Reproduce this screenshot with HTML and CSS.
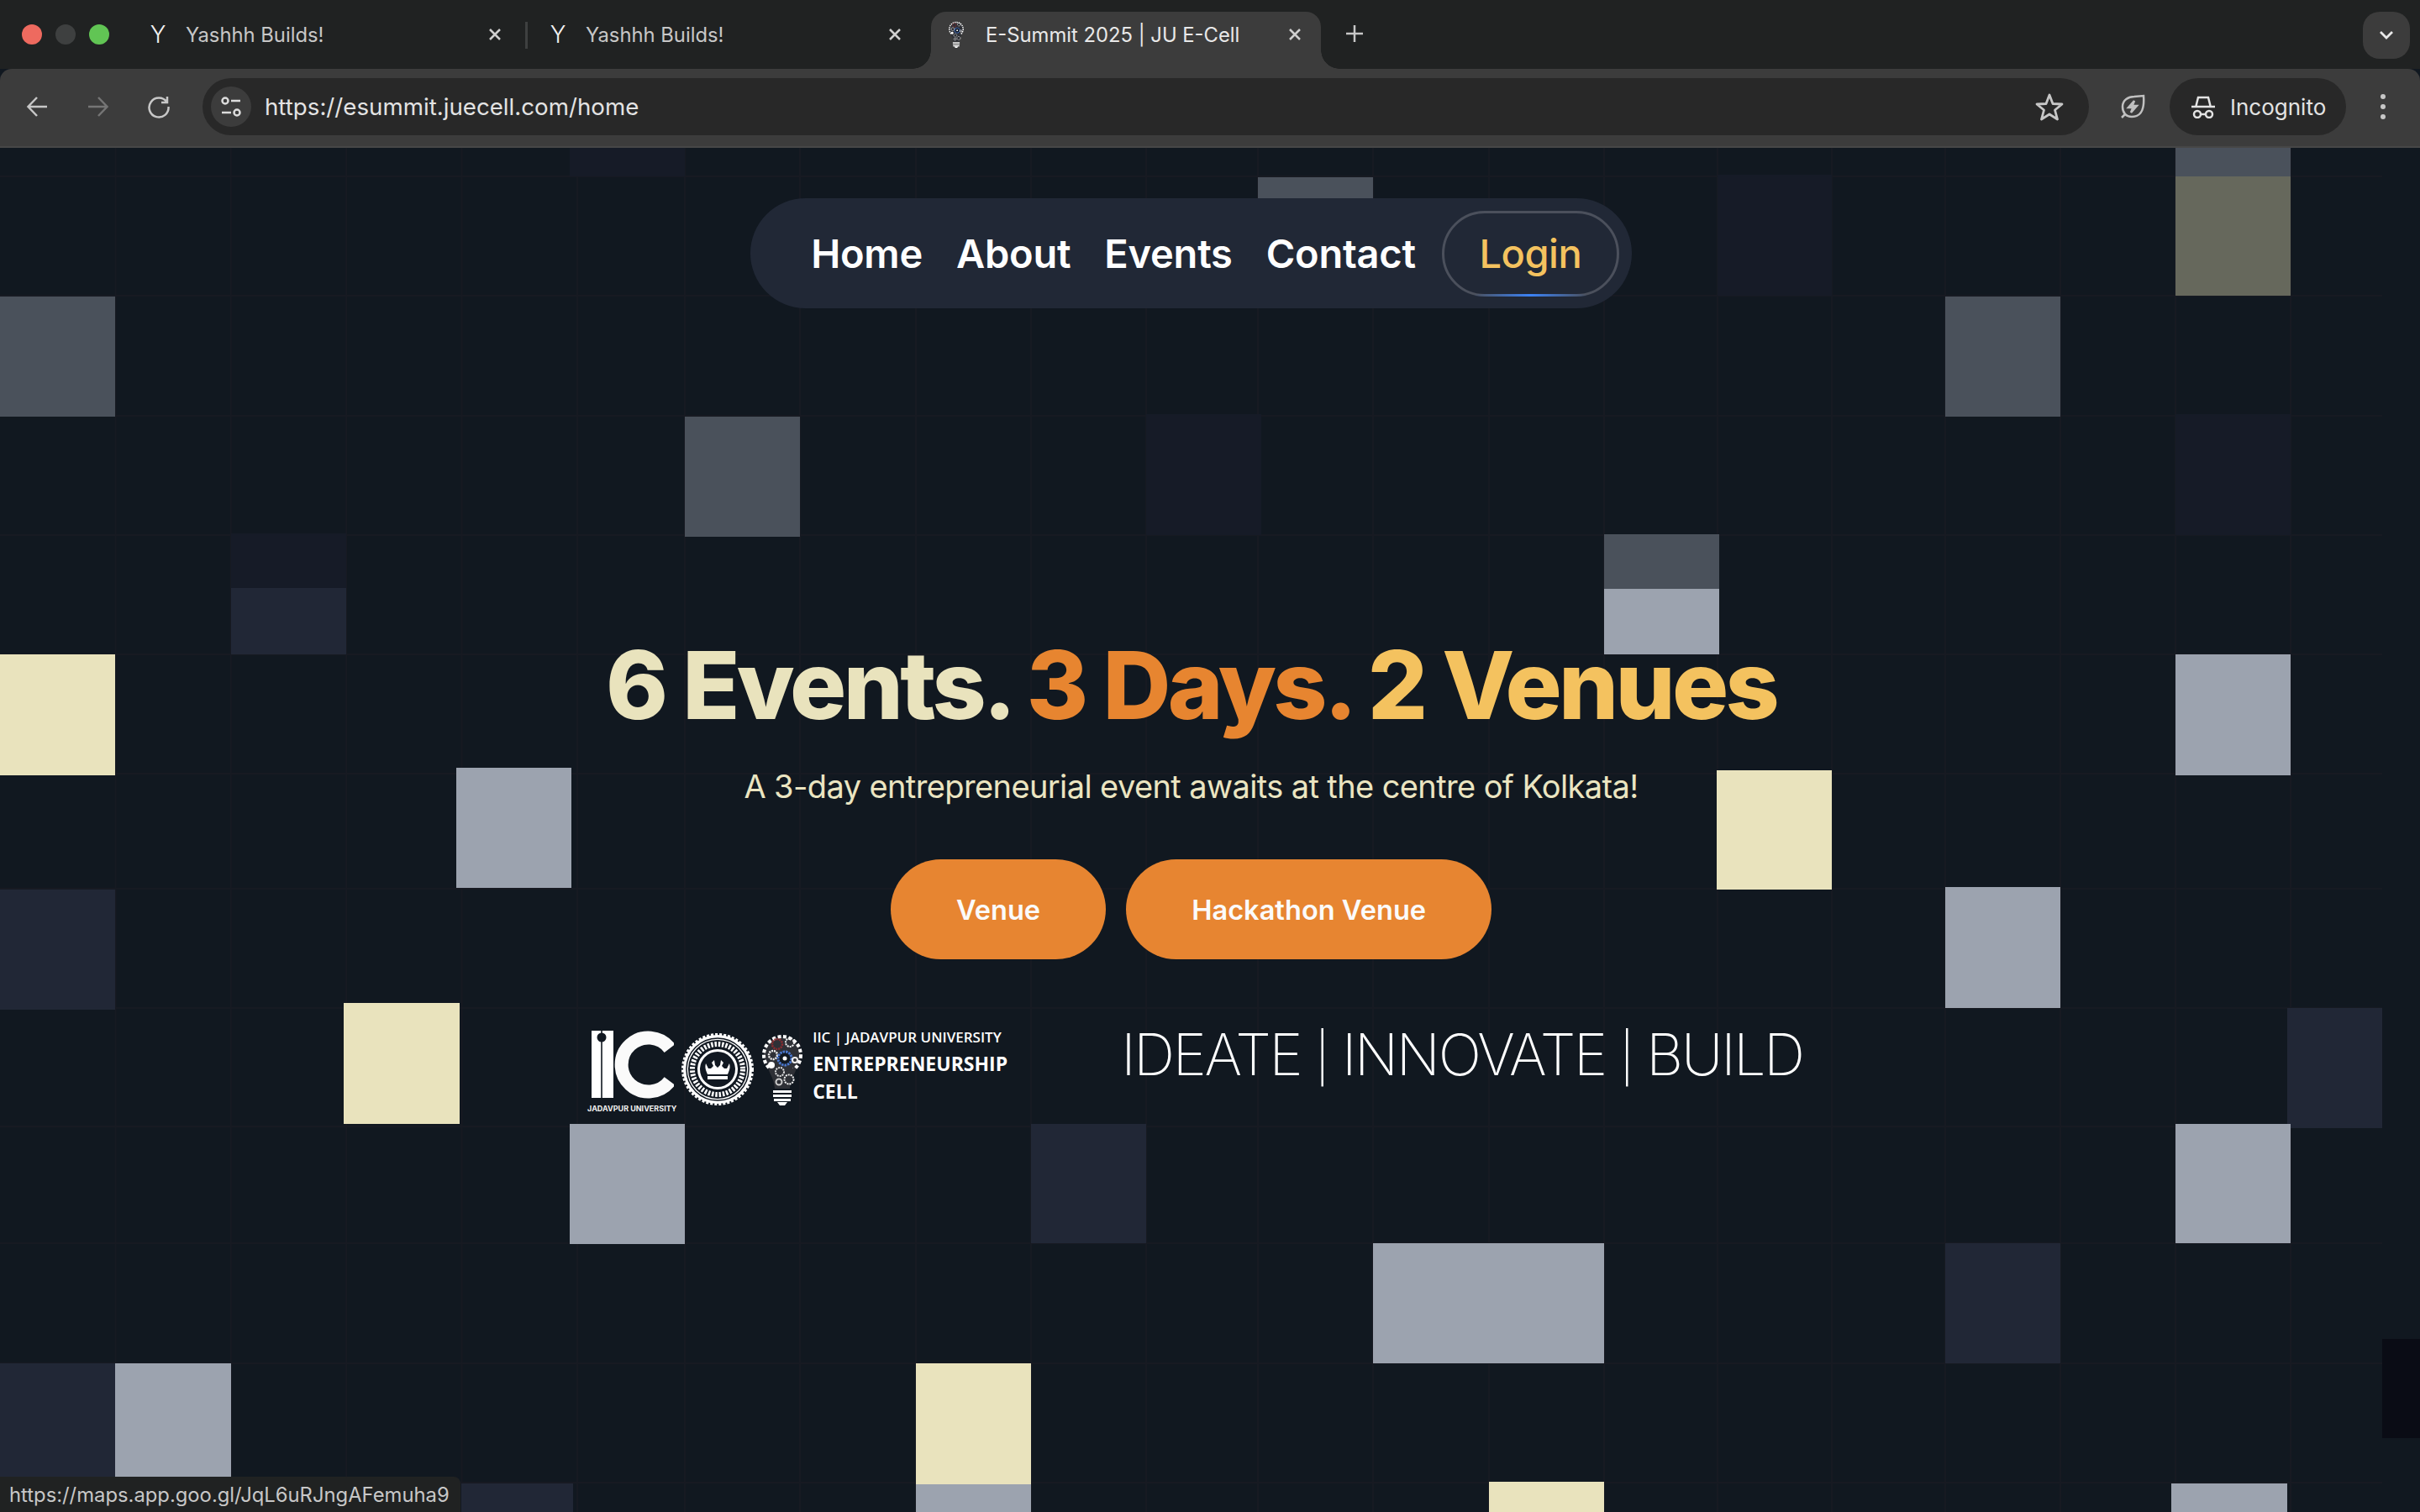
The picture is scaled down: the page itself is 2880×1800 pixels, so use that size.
FILE: index.html
```html
<!DOCTYPE html>
<html lang="en">
<head>
  <meta charset="UTF-8" />
  <title>E-Summit 2025 | JU E-Cell</title>
  <link rel="stylesheet" href="styles.css">
</head>
<body>

  <svg class="defs" width="0" height="0">
    <symbol id="bulb" viewBox="0 0 50 86">
      <circle cx="25" cy="26" r="22" fill="#2e3036" stroke="#fff" stroke-width="4" stroke-dasharray="4 2.5"/>
      <path d="M8 42 C12 52 15 55 16 66 H34 C35 55 38 52 42 42 Z" fill="#2e3036"/>
      <circle cx="14" cy="26" r="5" fill="none" stroke="#eee" stroke-width="2.5" stroke-dasharray="2 1"/>
      <circle cx="19" cy="13" r="6" fill="none" stroke="#8a2c30" stroke-width="2.5" stroke-dasharray="2 1"/>
      <circle cx="34" cy="11" r="5" fill="none" stroke="#eee" stroke-width="2" stroke-dasharray="2 1"/>
      <circle cx="28" cy="30" r="8" fill="#111821" stroke="#4a78cf" stroke-width="3" stroke-dasharray="2.5 1"/>
      <circle cx="28" cy="30" r="2.5" fill="#fff"/>
      <circle cx="12" cy="38" r="4" fill="#fff"/>
      <circle cx="40" cy="32" r="3" fill="none" stroke="#eee" stroke-width="2"/>
      <circle cx="22" cy="46" r="5" fill="none" stroke="#ddd" stroke-width="2" stroke-dasharray="2 1"/>
      <circle cx="33" cy="55" r="5.5" fill="none" stroke="#eee" stroke-width="2" stroke-dasharray="2 1"/>
      <circle cx="21" cy="58" r="3.5" fill="none" stroke="#ccc" stroke-width="2"/>
      <path d="M14 68 H36 V71 H14 Z M14 73 H36 V76 H14 Z M15 78 H35 V81 H15 Z M19 82 H31 L28 86 H22 Z" fill="#fff"/>
    </symbol>
  </svg>

  <!-- tab strip -->
  <div class="tabstrip">
    <div class="lights">
      <span class="light red"></span>
      <span class="light off"></span>
      <span class="light green"></span>
    </div>
    <div class="tab">
      <span class="fav-y">Y</span>
      <span class="tab-title">Yashhh Builds!</span>
      <svg class="tab-x" viewBox="0 0 16 16"><path d="M2 2 14 14M14 2 2 14"/></svg>
    </div>
    <span class="tab-sep"></span>
    <div class="tab">
      <span class="fav-y">Y</span>
      <span class="tab-title">Yashhh Builds!</span>
      <svg class="tab-x" viewBox="0 0 16 16"><path d="M2 2 14 14M14 2 2 14"/></svg>
    </div>
    <div class="tab active">
      <svg class="fav-bulb" viewBox="0 0 50 86"><use href="#bulb"/></svg>
      <span class="tab-title">E-Summit 2025 | JU E-Cell</span>
      <svg class="tab-x" viewBox="0 0 16 16"><path d="M2 2 14 14M14 2 2 14"/></svg>
    </div>
    <svg class="new-tab" viewBox="0 0 24 24"><path d="M12 2V22M2 12H22"/></svg>
    <div class="tab-menu">
      <svg viewBox="0 0 18 12"><path d="M2 2 9 9 16 2"/></svg>
    </div>
  </div>

  <!-- toolbar -->
  <div class="toolbar">
    <svg class="tool back" viewBox="0 0 30 30"><path d="M26 15H4M14 4 3.500 15 14 26"/></svg>
    <svg class="tool fwd" viewBox="0 0 30 30"><path d="M4 15H26M16 4 26.500 15 16 26"/></svg>
    <svg class="tool reload" viewBox="0 0 30 30"><path d="M24.500 9.500A11.500 11.500 0 1 0 26.500 15M25 3V10H18"/></svg>
    <div class="omnibox">
      <span class="site-btn">
        <svg viewBox="0 0 26 26"><circle cx="6" cy="6" r="3.500"/><path d="M13 6H24M2 20H13"/><circle cx="20" cy="20" r="3.500"/></svg>
      </span>
      <span class="url">https://esummit.juecell.com/home</span>
      <svg class="star" viewBox="0 0 34 34"><path d="M17 3 21 13.500 32 14 23.500 21 26.500 32 17 26 7.500 32 10.500 21 2 14 13 13.500Z"/></svg>
    </div>
    <svg class="leaf" viewBox="0 0 30 30"><path d="M28 2C29 15 27 27 14 27 7 27 3 22 3 15 3 7 10 3 17 3ZM2 28 6 24"/><path d="M17 8 10 16H15.500L13 22 20 14H14.500Z"/></svg>
    <div class="incognito">
      <svg viewBox="0 0 28 27"><path d="M5.500 12 8 2H20L22.500 12M0 13H28"/><circle cx="7" cy="22" r="4"/><circle cx="21" cy="22" r="4"/><path d="M11 22H17"/></svg>
      <span>Incognito</span>
    </div>
    <svg class="dots" viewBox="0 0 8 32"><circle cx="4" cy="4" r="3"/><circle cx="4" cy="16" r="3"/><circle cx="4" cy="28" r="3"/></svg>
  </div>

  <!-- page -->
  <div class="viewport">
    <main class="page">
      <svg class="tiles" viewBox="0 0 2835 1624" width="2835" height="1624">
        <path class="lines" d="M137.400 0V1624M274.800 0V1624M412.200 0V1624M549.600 0V1624M687 0V1624M815 0V1624M952 0V1624M1090 0V1624M1227 0V1624M1364 0V1624M1497 0V1624M1634 0V1624M1772 0V1624M1909 0V1624M2044 0V1624M2180 0V1624M2315 0V1624M2452 0V1624M2589 0V1624M2726 0V1624M0 34H2835M0 176H2835M0 319H2835M0 461H2835M0 603H2835M0 745H2835M0 882H2835M0 1024H2835M0 1165H2835M0 1304H2835M0 1447H2835M0 1589H2835"/>
        <rect class="dim" x="678" y="0" width="137" height="34"/>
        <rect class="gray" x="0" y="177" width="137" height="143"/>
        <rect class="gray" x="815" y="320" width="137" height="143"/>
        <rect class="dim" x="1364" y="317" width="137" height="144"/>
        <rect class="dim" x="275" y="459" width="137" height="65"/>
        <rect class="navy" x="275" y="524" width="137" height="79"/>
        <rect class="cream" x="0" y="603" width="137" height="144"/>
        <rect class="silver" x="543" y="738" width="137" height="143"/>
        <rect class="gray" x="1497" y="35" width="137" height="142"/>
        <rect class="dim" x="2044" y="32" width="136" height="144"/>
        <rect class="gray" x="2589" y="0" width="137" height="34"/>
        <rect class="olive" x="2589" y="34" width="137" height="142"/>
        <rect class="gray" x="2315" y="177" width="137" height="143"/>
        <rect class="dim" x="2589" y="317" width="137" height="144"/>
        <rect class="gray" x="1909" y="460" width="137" height="65"/>
        <rect class="silver" x="1909" y="525" width="137" height="78"/>
        <rect class="silver" x="2589" y="603" width="137" height="144"/>
        <rect class="cream" x="2043" y="741" width="137" height="142"/>
        <rect class="navy" x="0" y="883" width="137" height="143"/>
        <rect class="cream" x="409" y="1018" width="138" height="144"/>
        <rect class="silver" x="678" y="1162" width="137" height="143"/>
        <rect class="navy" x="1227" y="1162" width="137" height="142"/>
        <rect class="navy" x="0" y="1447" width="137" height="144"/>
        <rect class="silver" x="137" y="1447" width="138" height="144"/>
        <rect class="cream" x="1090" y="1447" width="137" height="144"/>
        <rect class="silver" x="1090" y="1591" width="137" height="33"/>
        <rect class="navy" x="549" y="1590" width="133" height="34"/>
        <rect class="silver" x="2315" y="880" width="137" height="144"/>
        <rect class="navy" x="2722" y="1024" width="113" height="143"/>
        <rect class="silver" x="2589" y="1162" width="137" height="142"/>
        <rect class="silver" x="1634" y="1304" width="275" height="143"/>
        <rect class="navy" x="2315" y="1304" width="137" height="143"/>
        <rect class="cream" x="1772" y="1588" width="137" height="36"/>
        <rect class="silver" x="2584" y="1590" width="138" height="34"/>
      </svg>

      <nav class="navbar">
        <a href="#">Home</a>
        <a href="#">About</a>
        <a href="#">Events</a>
        <a href="#">Contact</a>
        <a href="#" class="login">Login</a>
      </nav>

      <section class="hero">
        <h1><span class="c-cream">6 Events.</span> <span class="c-orange">3 Days.</span> <span class="c-yellow">2 Venues</span></h1>
        <p class="lead">A 3-day entrepreneurial event awaits at the centre of Kolkata!</p>
        <div class="actions">
          <a href="#" class="btn">Venue</a>
          <a href="#" class="btn">Hackathon Venue</a>
        </div>
        <div class="brand-row">
          <div class="logo">
            <div class="ic-mark">
              <svg viewBox="0 0 100 82" width="100" height="82">
                <path d="M2 0H13.200V80H2ZM14.800 0H28V80H14.800Z" fill="#fff"/>
                <circle cx="14" cy="8" r="5.500" fill="#111821"/>
                <path d="M95 21A32 32 0 1 0 95 60" fill="none" stroke="#fafafa" stroke-width="16"/>
              </svg>
              <span>JADAVPUR UNIVERSITY</span>
            </div>
            <svg class="seal" viewBox="0 0 88 88" width="88" height="88">
              <circle cx="44" cy="44" r="41" fill="#fff" stroke="#fff" stroke-width="4" stroke-dasharray="3 2"/>
              <circle cx="44" cy="44" r="37" fill="none" stroke="#111821" stroke-width="1.500"/>
              <circle cx="44" cy="44" r="29.500" fill="none" stroke="#111821" stroke-width="11"/>
              <circle cx="44" cy="44" r="30" fill="none" stroke="#fff" stroke-width="6" stroke-dasharray="2.500 1.800"/>
              <circle cx="44" cy="44" r="21" fill="#111821"/>
              <path d="M32 50 C29 43 29 41 30 37 L33 43 36 43 39 40 L37 36 40 33 41 39 44 42 47 39 48 33 51 36 49 40 52 43 55 43 58 37 C59 41 59 43 56 50ZM32 52H56V56H32Z" fill="#fff"/>
            </svg>
            <svg class="bulb" viewBox="0 0 50 86" width="50" height="86"><use href="#bulb"/></svg>
            <div class="logo-text">
              <span class="iic">IIC | JADAVPUR UNIVERSITY</span>
              <span class="ecell">ENTREPRENEURSHIP</span>
              <span class="ecell">CELL</span>
            </div>
          </div>
          <p class="motto">IDEATE <span class="pipe">|</span> INNOVATE <span class="pipe">|</span> BUILD</p>
        </div>
      </section>
    </main>
    <aside class="scrollbar"><span class="thumb"></span></aside>
    <div class="status">https://maps.app.goo.gl/JqL6uRJngAFemuha9</div>
  </div>

</body>
</html>
```

FILE: styles.css
```css
* {
  box-sizing: border-box;
}
html, body {
  margin: 0;
  padding: 0;
}
body {
  width: 2880px;
  height: 1800px;
  overflow: hidden;
  display: flex;
  flex-direction: column;
  background: #111820;
  font-family: Inter, "Liberation Sans", sans-serif;
}
a {
  text-decoration: none;
}
.defs {
  position: absolute;
}

/* tab strip */
.tabstrip {
  height: 82px;
  flex: none;
  display: flex;
  align-items: flex-start;
  padding: 14px 12px 0 26px;
  background: #202222;
}
.lights {
  display: flex;
  gap: 16px;
  margin: 15px 24px 0 0;
  width: 106px;
}
.light {
  width: 24px;
  height: 24px;
  border-radius: 50%;
}
.light.red { background: #ee6a5f; }
.light.off { background: #3e4040; }
.light.green { background: #61c554; }

.tab {
  position: relative;
  width: 464px;
  height: 54px;
  margin-right: 12px;
  flex: none;
  display: flex;
  align-items: center;
  padding: 0 22px 0 14px;
  color: #c7c7c7;
  font-size: 23.800px;
  border-radius: 18px 18px 0 0;
}
.tab-sep {
  width: 3px;
  height: 32px;
  margin: 12px 0 0 -7px;
  margin-right: 4px;
  flex: none;
  background: #3e4040;
}
.tab.active {
  height: 68px;
  padding-bottom: 14px;
  background: #3c3c3c;
  color: #e8e8e8;
}
.tab.active::before,
.tab.active::after {
  content: "";
  position: absolute;
  bottom: 0;
  width: 22px;
  height: 22px;
}
.tab.active::before {
  left: -22px;
  background: radial-gradient(circle at 0 0, transparent 21.500px, #3c3c3c 22px);
}
.tab.active::after {
  right: -22px;
  background: radial-gradient(circle at 100% 0, transparent 21.500px, #3c3c3c 22px);
}
.fav-y {
  width: 32px;
  margin: 0 17px 0 2px;
  text-align: center;
  color: #f2f2f2;
  font-size: 28px;
  font-weight: 300;
}
.fav-bulb {
  width: 32px;
  height: 32px;
  margin-right: 19px;
}
.tab-title {
  flex: 1;
  white-space: nowrap;
}
.tab-x {
  width: 16px;
  height: 16px;
  margin-right: 1px;
  fill: none;
  stroke: #d0d0d0;
  stroke-width: 2.500;
}
.new-tab {
  width: 24px;
  height: 24px;
  margin: 14px 0 0 16px;
  fill: none;
  stroke: #c7c7c7;
  stroke-width: 2.500;
}
.tab-menu {
  width: 56px;
  height: 56px;
  margin-left: auto;
  display: flex;
  align-items: center;
  justify-content: center;
  border-radius: 20px;
  background: #3c3c3c;
}
.tab-menu svg {
  width: 18px;
  height: 12px;
  fill: none;
  stroke: #e8e8e8;
  stroke-width: 2.800;
}

/* toolbar */
.toolbar {
  height: 94px;
  flex: none;
  display: flex;
  align-items: center;
  padding: 0 40px 2px 30px;
  background: #3c3c3c;
  border-bottom: 2px solid #474747;
  border-radius: 14px 14px 0 0;
}
.tool {
  width: 30px;
  height: 30px;
  fill: none;
  stroke: #c7c7c7;
  stroke-width: 2.500;
}
.tool.back {
  margin-right: 41px;
}
.tool.fwd {
  margin-right: 43px;
  stroke: #757575;
}
.tool.reload {
  margin-right: 37px;
}
.omnibox {
  flex: 1;
  height: 68px;
  display: flex;
  align-items: center;
  padding: 0 30px 0 10px;
  background: #282828;
  border-radius: 34px;
}
.site-btn {
  width: 48px;
  height: 48px;
  display: flex;
  align-items: center;
  justify-content: center;
  border-radius: 50%;
  background: #3c3c3c;
}
.site-btn svg {
  width: 26px;
  height: 26px;
  fill: none;
  stroke: #dcdcdc;
  stroke-width: 2.500;
}
.url {
  flex: 1;
  margin-left: 16px;
  color: #e3e3e3;
  font-size: 27.700px;
}
.star {
  width: 34px;
  height: 34px;
  fill: none;
  stroke: #c7c7c7;
  stroke-width: 2.800;
  stroke-linejoin: round;
}
.leaf {
  width: 30px;
  height: 30px;
  margin-left: 37px;
  fill: none;
  stroke: #c0c0c0;
  stroke-width: 2.500;
}
.incognito {
  width: 210px;
  height: 68px;
  margin-left: 29px;
  display: flex;
  align-items: center;
  gap: 18px;
  padding-left: 26px;
  color: #e3e3e3;
  font-size: 26px;
  background: #282828;
  border-radius: 34px;
}
.incognito svg {
  width: 28px;
  height: 27px;
  fill: none;
  stroke: #e3e3e3;
  stroke-width: 2.500;
}
.dots {
  width: 8px;
  height: 32px;
  margin-left: 40px;
  fill: #c7c7c7;
}

/* page */
.viewport {
  position: relative;
  flex: 1;
  display: flex;
}
.page {
  position: relative;
  flex: 1;
  display: flex;
  flex-direction: column;
  align-items: center;
  padding-top: 60px;
}
.tiles {
  position: absolute;
  top: 0;
  left: 0;
}
.tiles .lines { fill: none; stroke: #171a22; stroke-width: 2; }
.tiles .dim { fill: #161b27; }
.tiles .gray { fill: #4a515b; }
.tiles .navy { fill: #212736; }
.tiles .silver { fill: #9ca3af; }
.tiles .cream { fill: #e9e3bd; }
.tiles .olive { fill: #66685c; }

.scrollbar {
  width: 45px;
  flex: none;
  padding-top: 1418px;
}
.thumb {
  display: block;
  height: 118px;
  background: #0a0c15;
}

/* nav pill */
.navbar {
  position: relative;
  height: 131px;
  display: flex;
  align-items: center;
  padding: 0 15px 0 52px;
  background: #212836;
  border-radius: 66px;
}
.navbar a {
  padding: 0 20px;
  color: #fff;
  font-size: 47px;
  font-weight: 600;
  letter-spacing: -0.005em;
}
.navbar a.login {
  position: relative;
  width: 211px;
  height: 102px;
  margin-left: 11px;
  display: flex;
  align-items: center;
  justify-content: center;
  padding: 0;
  color: #f4c25f;
  font-weight: 500;
  letter-spacing: -0.01em;
  border: 3px solid #4b505c;
  border-radius: 51px;
}
.navbar a.login::after {
  content: "";
  position: absolute;
  left: 35px;
  right: 35px;
  bottom: -3px;
  height: 3px;
  background: linear-gradient(90deg, transparent, #3b82f6, transparent);
}

/* hero */
.hero {
  position: relative;
  display: flex;
  flex-direction: column;
  align-items: center;
  padding-top: 387px;
}
.hero h1 {
  margin: 0;
  font-size: 112px;
  line-height: 123px;
  font-weight: 800;
  letter-spacing: -0.033em;
  white-space: nowrap;
}
.c-cream { color: #e9e3bd; }
.c-orange { color: #e78530; }
.c-yellow { color: #f4c25f; }
.lead {
  margin: 36px 0 0;
  color: #ebe5c1;
  font-size: 38px;
  line-height: 46px;
  letter-spacing: -0.016em;
}
.actions {
  display: flex;
  gap: 24px;
  margin-top: 64px;
}
.btn {
  height: 119px;
  display: flex;
  align-items: center;
  padding: 0 78px;
  color: #fbfbfb;
  font-size: 32.600px;
  font-weight: 600;
  background: #e78531;
  border-radius: 60px;
}
.brand-row {
  display: flex;
  align-items: flex-start;
  gap: 135px;
  margin-top: 85px;
}
.logo {
  display: flex;
  align-items: flex-start;
  padding-left: 13px;
}
.ic-mark {
  display: flex;
  flex-direction: column;
  align-items: center;
  width: 100px;
}
.ic-mark span {
  margin-top: 5px;
  color: #f0f0f0;
  font-size: 9px;
  font-weight: 700;
  white-space: nowrap;
}
.seal {
  margin: 2px 0 0 8px;
}
.bulb {
  margin: 3px 0 0 8px;
}
.logo-text {
  display: flex;
  flex-direction: column;
  margin: -2px 0 0 11px;
  color: #fff;
  font-family: "Open Sans", sans-serif;
}
.iic {
  font-size: 17px;
  line-height: 20px;
  font-weight: 600;
  white-space: nowrap;
}
.ecell {
  margin-top: 9px;
  font-size: 23px;
  line-height: 24px;
  font-weight: 700;
}
.motto {
  margin: -13px 0 0;
  color: #fff;
  font-size: 68px;
  line-height: 82px;
  font-weight: 200;
  letter-spacing: -0.033em;
  white-space: nowrap;
}
.pipe {
  font-size: 58px;
}

/* link preview in the corner */
.status {
  position: absolute;
  left: 0;
  bottom: 0;
  height: 42px;
  display: flex;
  align-items: center;
  padding: 0 13px 0 11px;
  color: #c7c7c7;
  font-size: 23.800px;
  background: #202222;
  border-top-right-radius: 8px;
}
```
